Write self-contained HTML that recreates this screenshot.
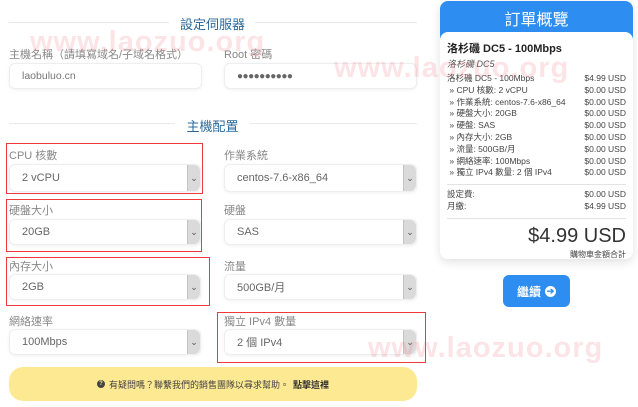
<!DOCTYPE html>
<html><head><meta charset="utf-8"><style>
*{box-sizing:border-box;margin:0;padding:0}
body{width:638px;height:407px;overflow:hidden;background:#fff;font-family:"Liberation Sans","Noto Sans CJK TC",sans-serif;color:#555;position:relative}
.a{position:absolute}
.sec{font-size:13px;color:#2b6a9a;text-align:center}
.line{height:1px;background:#e6e9ee}
.lbl{font-size:11px;color:#888}
.inp{border:1px solid #eceef1;border-radius:6px;background:#fff;box-shadow:0 1px 3px rgba(0,0,0,.06);font-size:11px;color:#666;padding-left:12px;display:flex;align-items:center}
.sel .arr{position:absolute;right:0;top:0;bottom:0;width:13px;background:#dadada;border-left:1px solid #c4c4c4;border-radius:0 6px 6px 0;font-size:9px;color:#555;display:flex;align-items:center;justify-content:center}
.red{border:1.5px solid #ee3a3a}
.wm{font-weight:bold;color:rgba(240,120,130,.2);font-size:29px;letter-spacing:1px;white-space:nowrap}
.row{display:flex;justify-content:space-between;font-size:8.5px;color:#444;line-height:11.8px}
</style></head><body>

<div class="a line" style="left:9px;top:22px;width:160px"></div>
<div class="a line" style="left:255px;top:22px;width:162px"></div>
<div class="a sec" style="left:170px;top:14px;width:85px">設定伺服器</div>

<div class="a lbl" style="left:9px;top:46px">主機名稱（請填寫域名/子域名格式）</div>
<div class="a lbl" style="left:224px;top:46px">Root 密碼</div>
<div class="a inp" style="left:9px;top:63px;width:193px;height:26px;font-size:10.5px;color:#777">laobuluo.cn</div>
<div class="a inp" style="left:224px;top:63px;width:193px;height:26px;font-size:10px;color:#666;letter-spacing:-0.5px">●●●●●●●●●●</div>

<div class="a line" style="left:9px;top:123px;width:166px"></div>
<div class="a line" style="left:250px;top:123px;width:167px"></div>
<div class="a sec" style="left:175px;top:116px;width:75px">主機配置</div>

<div class="a lbl" style="left:9px;top:147px">CPU 核數</div>
<div class="a lbl" style="left:224px;top:147px">作業系統</div>
<div class="a inp sel" style="left:9px;top:164px;width:192px;height:28px">2 vCPU<span class="arr">⌄</span></div>
<div class="a inp sel" style="left:224px;top:164px;width:193px;height:28px">centos-7.6-x86_64<span class="arr">⌄</span></div>

<div class="a lbl" style="left:9px;top:202px">硬盤大小</div>
<div class="a lbl" style="left:224px;top:202px">硬盤</div>
<div class="a inp sel" style="left:9px;top:219px;width:192px;height:26px">20GB<span class="arr">⌄</span></div>
<div class="a inp sel" style="left:224px;top:219px;width:193px;height:26px">SAS<span class="arr">⌄</span></div>

<div class="a lbl" style="left:9px;top:258px">內存大小</div>
<div class="a lbl" style="left:224px;top:258px">流量</div>
<div class="a inp sel" style="left:9px;top:274px;width:192px;height:26px">2GB<span class="arr">⌄</span></div>
<div class="a inp sel" style="left:224px;top:274px;width:193px;height:26px">500GB/月<span class="arr">⌄</span></div>

<div class="a lbl" style="left:9px;top:313px">網絡速率</div>
<div class="a lbl" style="left:224px;top:313px">獨立 IPv4 數量</div>
<div class="a inp sel" style="left:9px;top:329px;width:192px;height:26px">100Mbps<span class="arr">⌄</span></div>
<div class="a inp sel" style="left:224px;top:329px;width:193px;height:26px">2 個 IPv4<span class="arr">⌄</span></div>

<div class="a red" style="left:6px;top:143px;width:197px;height:51px"></div>
<div class="a red" style="left:6px;top:199px;width:196px;height:53px"></div>
<div class="a red" style="left:6px;top:257px;width:204px;height:49px"></div>
<div class="a red" style="left:217px;top:312px;width:209px;height:51px"></div>

<div class="a" style="left:9px;top:367px;width:408px;height:34px;background:#fde992;border-radius:14px;font-size:9px;color:#444;display:flex;align-items:center;justify-content:center"><span style="display:inline-block;width:8px;height:8px;border-radius:50%;background:#444;color:#fde992;font-size:6px;line-height:8px;text-align:center;margin-right:4px;font-weight:bold">?</span>有疑問嗎？聯繫我們的銷售團隊以尋求幫助。 <b style="margin-left:4px;color:#333">點擊這裡</b></div>

<div class="a" style="left:440px;top:1px;width:193px;height:258px;border-radius:8px;background:#fff;box-shadow:0 3px 10px rgba(0,0,0,.12);overflow:hidden">
 <div style="background:#2d8df0;height:40px;color:#fff;font-size:16px;text-align:center;padding-top:5px">訂單概覽</div>
 <div style="position:absolute;top:31px;left:0;right:0;bottom:0;background:#fff;border-radius:8px 8px 0 0;padding:8px 7px 0 7px">
  <div style="font-weight:bold;font-size:11px;color:#222">洛杉磯 DC5 - 100Mbps</div>
  <div style="font-style:italic;font-size:9px;color:#555;margin:1px 0 3px">洛杉磯 DC5</div>
  <div class="row"><span>洛杉磯 DC5 - 100Mbps</span><span>$4.99 USD</span></div>
  <div class="row"><span>&nbsp;» CPU 核數: 2 vCPU</span><span>$0.00 USD</span></div>
  <div class="row"><span>&nbsp;» 作業系統: centos-7.6-x86_64</span><span>$0.00 USD</span></div>
  <div class="row"><span>&nbsp;» 硬盤大小: 20GB</span><span>$0.00 USD</span></div>
  <div class="row"><span>&nbsp;» 硬盤: SAS</span><span>$0.00 USD</span></div>
  <div class="row"><span>&nbsp;» 內存大小: 2GB</span><span>$0.00 USD</span></div>
  <div class="row"><span>&nbsp;» 流量: 500GB/月</span><span>$0.00 USD</span></div>
  <div class="row"><span>&nbsp;» 網絡速率: 100Mbps</span><span>$0.00 USD</span></div>
  <div class="row"><span>&nbsp;» 獨立 IPv4 數量: 2 個 IPv4</span><span>$0.00 USD</span></div>
  <div style="height:1px;background:#e3e3e3;margin:5px 0 4px"></div>
  <div class="row"><span>設定費:</span><span>$0.00 USD</span></div>
  <div class="row"><span>月繳:</span><span>$4.99 USD</span></div>
  <div style="height:1px;background:#e3e3e3;margin:5px 0 4px"></div>
  <div style="text-align:right;font-size:20px;color:#333;line-height:26px">$4.99 USD</div>
  <div style="text-align:right;font-size:8px;color:#444">購物車金額合計</div>
 </div>
</div>

<div class="a" style="left:503px;top:275px;width:67px;height:32px;background:#2d8df0;border-radius:6px;color:#fff;font-weight:bold;font-size:12px;display:flex;align-items:center;justify-content:center">繼續<span style="display:inline-block;width:11px;height:11px;border-radius:50%;background:#fff;color:#2d8df0;font-size:9px;line-height:11px;text-align:center;margin-left:4px">➔</span></div>

<div class="a wm" style="left:30px;top:26px">www.laozuo.org</div>
<div class="a wm" style="left:334px;top:52px">www.laozuo.org</div>
<div class="a wm" style="left:368px;top:332px">www.laozuo.org</div>
</body></html>
